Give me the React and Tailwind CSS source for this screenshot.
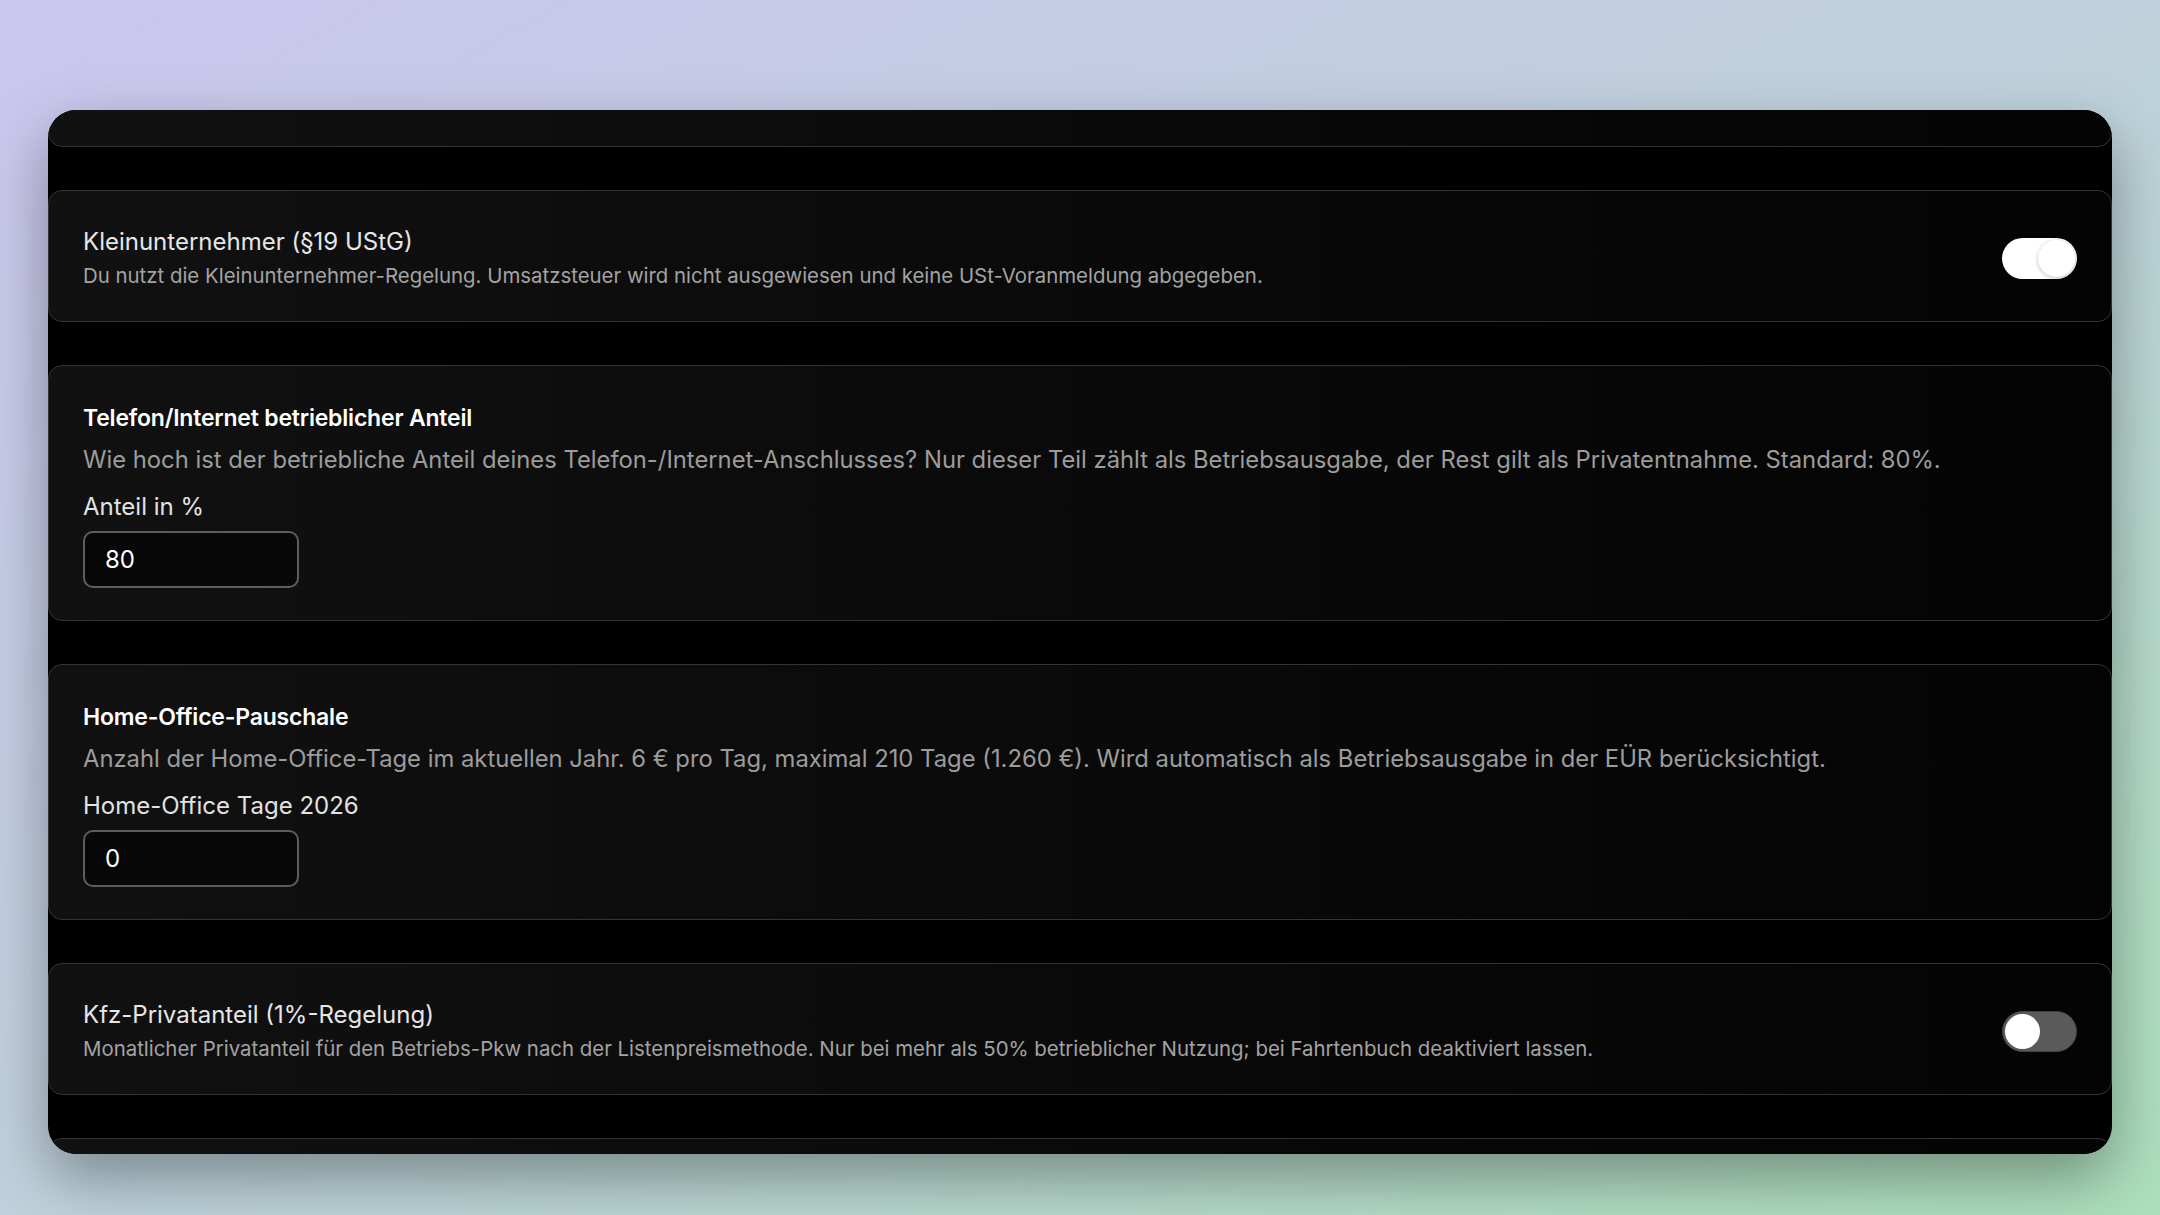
import React from 'react';

const Toggle = ({ on }) => (
  <div
    className={
      on
        ? 'w-[75px] h-[41px] rounded-full bg-white p-[2px] flex justify-end shrink-0'
        : 'w-[75px] h-[41px] rounded-full bg-[#5a5a5a] border border-[#444] p-[2px] flex justify-start shrink-0'
    }
  >
    <div
      className={
        on
          ? 'w-[37px] h-[37px] rounded-full bg-white shadow-[0_1px_4px_rgba(0,0,0,0.25)]'
          : 'w-[35px] h-[35px] rounded-full bg-white'
      }
    />
  </div>
);

const cardClass =
  'rounded-[14px] border border-[#343434] bg-linear-to-r from-[#111111] via-[#0a0a0a] to-[#040404]';

const ToggleCard = ({ title, text, on }) => (
  <div className={`${cardClass} flex items-center justify-between px-[34px] pt-[35px] pb-[31px]`}>
    <div>
      <div className="text-[24px] leading-[32px] text-[#e6e6e6]">{title}</div>
      <div className="mt-[4px] text-[20.4px] leading-[28px] text-[#a3a3a3]">{text}</div>
    </div>
    <Toggle on={on} />
  </div>
);

const InputCard = ({ title, text, label, value }) => (
  <div className={`${cardClass} px-[34px] pt-[38px] pb-[32px]`}>
    <div className="text-[23px] leading-[28px] font-semibold text-white tracking-[-0.2px]">{title}</div>
    <div className="mt-[12px] text-[23.8px] leading-[32px] text-[#9c9c9c]">{text}</div>
    <div className="mt-[15px] text-[24px] leading-[32px] text-[#e2e2e2]">{label}</div>
    <div className="mt-[8px] w-[216px] h-[57px] rounded-[10px] border-2 border-[#5e5e5e] bg-[#080808] flex items-center px-[20px] text-[24px] text-white">
      {value}
    </div>
  </div>
);

export default function App() {
  return (
    <div
      className="w-full h-[1215px] bg-linear-to-br from-[#cbc6ee] via-[#bfd1dc] to-[#acdfba] px-[48px] pt-[110px] pb-[61px]"
      style={{ fontFamily: 'Inter, "Noto Sans", sans-serif' }}
    >
      <div className="h-full rounded-[28px] bg-black overflow-hidden shadow-[0_24px_60px_rgba(0,0,0,0.35)]">
        <div className="flex flex-col gap-[43px]">
          <div className={`${cardClass} h-[100px] -mt-[63px]`} />
          <ToggleCard
            title="Kleinunternehmer (§19 UStG)"
            text="Du nutzt die Kleinunternehmer-Regelung. Umsatzsteuer wird nicht ausgewiesen und keine USt-Voranmeldung abgegeben."
            on
          />
          <InputCard
            title="Telefon/Internet betrieblicher Anteil"
            text="Wie hoch ist der betriebliche Anteil deines Telefon-/Internet-Anschlusses? Nur dieser Teil zählt als Betriebsausgabe, der Rest gilt als Privatentnahme. Standard: 80%."
            label="Anteil in %"
            value="80"
          />
          <InputCard
            title="Home-Office-Pauschale"
            text="Anzahl der Home-Office-Tage im aktuellen Jahr. 6 € pro Tag, maximal 210 Tage (1.260 €). Wird automatisch als Betriebsausgabe in der EÜR berücksichtigt."
            label="Home-Office Tage 2026"
            value="0"
          />
          <ToggleCard
            title="Kfz-Privatanteil (1%-Regelung)"
            text="Monatlicher Privatanteil für den Betriebs-Pkw nach der Listenpreismethode. Nur bei mehr als 50% betrieblicher Nutzung; bei Fahrtenbuch deaktiviert lassen."
            on={false}
          />
          <div className={`${cardClass} h-[120px]`} />
        </div>
      </div>
    </div>
  );
}
